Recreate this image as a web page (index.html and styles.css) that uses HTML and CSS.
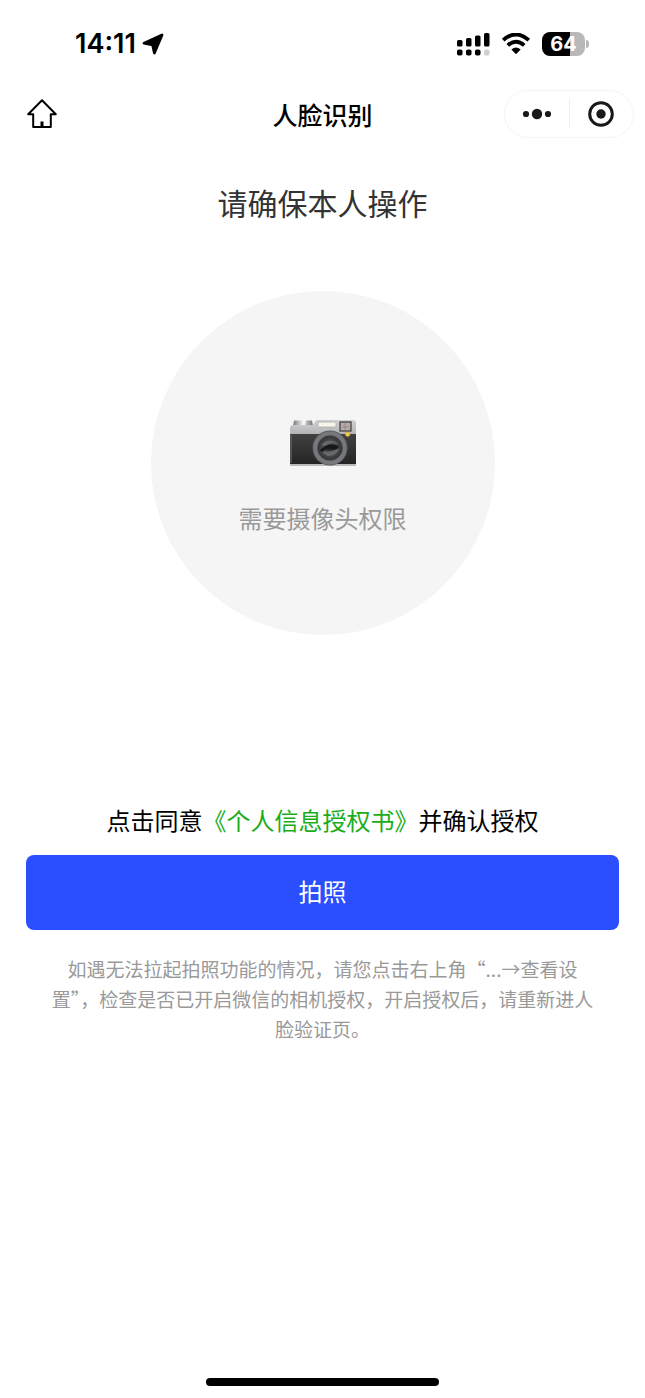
FILE: index.html
```html
<!DOCTYPE html>
<html lang="zh-CN">
<head>
<meta charset="utf-8">
<meta name="viewport" content="width=device-width, initial-scale=1">
<title>人脸识别</title>
<link rel="stylesheet" href="styles.css">
</head>
<body>
<div class="screen">
  <div class="status-bar">
    <div class="status-left">
      <span class="time">14:11</span>
      <svg class="location" width="22" height="22" viewBox="0 0 22 22" aria-hidden="true"><path d="M20 2 12.400 20 10.600 12 2 10.200Z" stroke="#000" stroke-width="2.800" stroke-linejoin="round"/></svg>
    </div>
    <div class="status-right">
      <svg width="34" height="24" viewBox="0 0 34 24" aria-hidden="true">
        <rect x="1" y="8" width="5.500" height="6.500" rx="1.500"/><rect x="10" y="6" width="5.500" height="8.500" rx="1.500"/><rect x="19" y="3.500" width="5.500" height="11" rx="1.500"/><rect x="28" y="1" width="5.500" height="13.500" rx="1.500"/>
        <rect x="1" y="17.500" width="5.500" height="6" rx="1.800"/><rect x="10" y="17.500" width="5.500" height="6" rx="1.800"/><rect x="19" y="17.500" width="5.500" height="6" rx="1.800"/><rect x="28" y="17.500" width="5.500" height="6" rx="1.800" fill="#d0d0d0"/>
      </svg>
      <svg width="30" height="22" viewBox="0 0 30 22" aria-hidden="true">
        <path d="M2.200 7.200Q15-4.300 27.800 7.200M6.800 12.300Q15 5 23.200 12.300" fill="none" stroke="#000" stroke-width="3.800"/>
        <path d="M10.400 16.600Q15 12.600 19.600 16.600L15.800 20.600Q15 21.400 14.200 20.600Z"/>
      </svg>
      <div class="battery"><span class="battery-body">64</span><span class="battery-tip"></span></div>
    </div>
  </div>

  <header class="nav">
    <button class="home" type="button" aria-label="首页">
      <svg width="32" height="32" viewBox="0 0 32 32" fill="none" stroke="#000" stroke-width="2" stroke-linejoin="round" stroke-linecap="round" aria-hidden="true"><path d="M16 2.300 2.200 16.200H7.200V29H24.800V16.200H29.800Z"/><path d="M16 23.500V28.500" stroke-width="3" stroke-linecap="butt"/></svg>
    </button>
    <h1 class="nav-title">人脸识别</h1>
    <div class="capsule">
      <button class="capsule-button" type="button" aria-label="更多">
        <svg width="30" height="12" viewBox="0 0 30 12" fill="#191919" aria-hidden="true"><circle cx="4" cy="6" r="3.100"/><circle cx="15" cy="6" r="5.200"/><circle cx="26" cy="6" r="3.100"/></svg>
      </button>
      <span class="divider"></span>
      <button class="capsule-button" type="button" aria-label="关闭">
        <svg width="28" height="28" viewBox="0 0 28 28" fill="#191919" aria-hidden="true"><circle cx="14" cy="14" r="11.300" fill="none" stroke="#191919" stroke-width="3"/><circle cx="14" cy="14" r="4.700"/></svg>
      </button>
    </div>
  </header>

  <main class="content">
    <h2 class="heading">请确保本人操作</h2>
    <div class="preview">
      <svg width="70" height="50" viewBox="0 0 70 50" aria-hidden="true">
        <defs>
          <linearGradient id="metal" x2="0" y2="1"><stop stop-color="#d2d2d4"/><stop offset="1" stop-color="#b2b2b5"/></linearGradient>
          <linearGradient id="knob"><stop stop-color="#77777a"/><stop offset=".45" stop-color="#e6e6e8"/><stop offset="1" stop-color="#77777a"/></linearGradient>
          <linearGradient id="leather" x2="0" y2="1"><stop stop-color="#414142"/><stop offset="1" stop-color="#242425"/></linearGradient>
          <radialGradient id="glass"><stop stop-color="#202123"/><stop offset=".6" stop-color="#4b4d50"/><stop offset="1" stop-color="#333437"/></radialGradient>
        </defs>
        <path d="M5 8 6 2.500H14L15 8ZM17 8 18 2.500H24L25 8Z" fill="url(#knob)"/>
        <path d="M2 10Q2 7 5 7H25L28 2H65Q68 2 68 5V17H2Z" fill="url(#metal)"/>
        <path d="M2 16H68V46H2Z" fill="url(#leather)"/>
        <path d="M2 46H68V47Q68 48 67 48H3Q2 48 2 47Z" fill="#b9b9bb"/>
        <path d="M3 17V45" stroke="#747476"/>
        <rect x="30" y="4" width="18" height="5" rx="1" fill="#f7f5e9" stroke="#a8a8a5" stroke-width=".7"/>
        <rect x="52" y="4" width="11" height="9" fill="#b7aaa7" stroke="#454547" stroke-width="1.300"/>
        <path d="M54 9H61M57 5V11" stroke="#857e7b" stroke-width=".7"/>
        <circle cx="42" cy="30" r="17.500" fill="#606165"/>
        <circle cx="42" cy="30" r="14.800" fill="none" stroke="#77787c" stroke-width="3.500"/>
        <circle cx="42" cy="30" r="12" fill="url(#glass)" stroke="#3a3b3e"/>
        <path d="M33 27Q41 19 50 26Q43 24 37 28ZM34 34Q43 34 51 31Q48 38 40 38Z" fill="#7d8185" opacity=".6"/>
        <path d="M32 32Q40 24 51 28Q49 33 43 31Q38 30 34 34Z" fill="#17181a"/>
        <circle cx="59.700" cy="16.300" r="2.300" fill="#f4ca4f" stroke="#bc8f27" stroke-width=".5"/>
      </svg>
      <p class="preview-text">需要摄像头权限</p>
    </div>
    <p class="agreement">点击同意<a class="agreement-link" href="#">《个人信息授权书》</a>并确认授权</p>
    <button class="primary" type="button">拍照</button>
    <p class="hint">如遇无法拉起拍照功能的情况，请您点击右上角“...→查看设置”，检查是否已开启微信的相机授权，开启授权后，请重新进人脸验证页。</p>
  </main>
  <div class="home-indicator"></div>
</div>
</body>
</html>
```
FILE: styles.css
```css
* { box-sizing: border-box; }
body {
  margin: 0;
  background: #fff;
  color: #000;
  font-family: "Noto Sans CJK SC", sans-serif;
}
h1, h2, p { margin: 0; font-weight: 400; }
button {
  padding: 0;
  border: 0;
  background: none;
  font-family: inherit;
  color: inherit;
}
svg { display: block; flex: none; }
.screen {
  display: flex;
  flex-direction: column;
  min-height: 100vh;
}
.status-bar {
  display: flex;
  justify-content: space-between;
  align-items: center;
  height: 88px;
  padding: 0 56px 0 75px;
  font-family: Inter, sans-serif;
}
.status-left { display: flex; align-items: center; gap: 6px; }
.time { font-size: 27px; font-weight: 600; line-height: 32px; }
.status-right { display: flex; align-items: center; gap: 11px; }
.battery { display: flex; align-items: center; gap: 1px; }
.battery-body {
  width: 43px;
  border-radius: 8px;
  background: linear-gradient(to right, #000 64%, #b8b8b8 64%);
  color: #fff;
  font-size: 20px;
  font-weight: 700;
  line-height: 24px;
  text-align: center;
}
.battery-tip { width: 3px; height: 8px; border-radius: 0 4px 4px 0; background: #b8b8b8; }
.nav {
  display: grid;
  grid-template-columns: 1fr auto 1fr;
  align-items: center;
  height: 52px;
  padding: 0 11px;
}
.home { justify-self: start; margin-left: 15px; }
.nav-title { font-size: 25px; font-weight: 500; line-height: 36px; }
.capsule {
  display: flex;
  align-items: center;
  justify-self: end;
  width: 130px;
  height: 48px;
  border: 1px solid #f5f5f5;
  border-radius: 24px;
}
.capsule-button { display: flex; flex: 1; align-items: center; justify-content: center; height: 100%; }
.divider { width: 1px; height: 30px; background: #eee; }
.content {
  display: flex;
  flex: 1;
  flex-direction: column;
  align-items: center;
  padding: 40px 26px;
  text-align: center;
}
.heading { color: #333; font-size: 30px; line-height: 44px; }
.preview {
  display: flex;
  flex-direction: column;
  align-items: center;
  justify-content: center;
  gap: 32px;
  width: 344px;
  aspect-ratio: 1;
  margin-top: 67px;
  padding-top: 28px;
  border-radius: 50%;
  background: #f5f5f5;
}
.preview-text { color: #999; font-size: 24px; line-height: 36px; }
.agreement { margin-top: 167px; font-size: 24px; line-height: 36px; }
.agreement-link { color: #1aad19; text-decoration: none; }
.primary {
  width: 100%;
  margin-top: 17px;
  padding: 18px 20px 22px;
  border-radius: 8px;
  background: #2b4eff;
  color: #fff;
  font-size: 24px;
  line-height: 35px;
}
.hint {
  padding: 0 22px;
  margin-top: 24px;
  color: #999;
  font-size: 19px;
  line-height: 30px;
}
.home-indicator {
  align-self: center;
  width: 36%;
  height: 8px;
  margin-bottom: 12px;
  border-radius: 4px;
  background: #000;
}
```
